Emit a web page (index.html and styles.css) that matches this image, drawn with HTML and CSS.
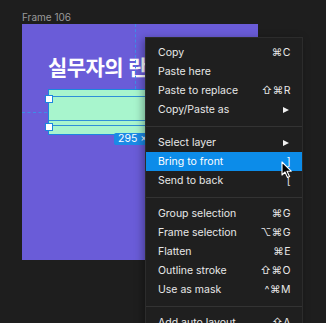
FILE: index.html
```html
<!DOCTYPE html>
<html lang="ko">
<head>
    <meta charset="UTF-8">
    <title>Frame 106</title>
    <link rel="stylesheet" href="styles.css">
</head>
<body>
    <div class="canvas">
        <div class="frame-label">Frame 106</div>
        <div class="frame">
            <h1 class="title">실무자의 란딩</h1>
            <div class="guide-v"></div>
            <div class="guide-h"></div>
            <div class="box">
                <div class="box-row top"></div>
                <div class="box-row mid"></div>
                <div class="box-row low"></div>
                <span class="handle h1"></span>
                <span class="handle h2"></span>
            </div>
            <div class="size-badge">295 × 44</div>
        </div>

        <div class="menu">
            <div class="item"><span>Copy</span><span class="key">⌘C</span></div>
            <div class="item"><span>Paste here</span></div>
            <div class="item"><span>Paste to replace</span><span class="key">⇧⌘R</span></div>
            <div class="item"><span>Copy/Paste as</span><span class="arrow"></span></div>
            <div class="sep"></div>
            <div class="item"><span>Select layer</span><span class="arrow"></span></div>
            <div class="item active"><span>Bring to front</span><span class="key">]</span></div>
            <div class="item"><span>Send to back</span><span class="key">[</span></div>
            <div class="sep"></div>
            <div class="item"><span>Group selection</span><span class="key">⌘G</span></div>
            <div class="item"><span>Frame selection</span><span class="key">⌥⌘G</span></div>
            <div class="item"><span>Flatten</span><span class="key">⌘E</span></div>
            <div class="item"><span>Outline stroke</span><span class="key">⇧⌘O</span></div>
            <div class="item"><span>Use as mask</span><span class="key">^⌘M</span></div>
            <div class="sep"></div>
            <div class="item"><span>Add auto layout</span><span class="key">⇧A</span></div>
        </div>

        <svg class="cursor" width="12" height="18" viewBox="0 0 12 18">
            <path d="M1 1 L1 14 L4 11 L6.5 16.5 L8.5 15.6 L6 10.2 L10.2 10.2 Z" fill="#000" stroke="#fff" stroke-width="1.1" stroke-linejoin="round"/>
        </svg>
    </div>
</body>
</html>
```

FILE: styles.css
```css
body {
    margin: 0;
    background-color: #1e1e1e;
    font-family: Inter, "Noto Sans", sans-serif;
    overflow: hidden;
}
.canvas {
    position: relative;
    width: 326px;
    height: 323px;
    padding: 10px 0 0 22px;
    box-sizing: border-box;
}
.frame-label {
    color: #9a9a9a;
    font-size: 10px;
    line-height: 14px;
}
.frame {
    position: relative;
    width: 236px;
    height: 236px;
    background-color: #6a5cd8;
    overflow: hidden;
    padding: 28px 0 0 26px;
    box-sizing: border-box;
}
.title {
    margin: 0;
    color: #fff;
    font-family: "Noto Sans CJK KR", sans-serif;
    font-size: 21px;
    font-weight: 700;
    letter-spacing: -0.6px;
    line-height: 28px;
    white-space: nowrap;
}
.guide-v {
    position: absolute;
    left: 113px;
    top: 0;
    height: 65px;
    border-left: 1px dashed #3d8de8;
}
.guide-h {
    position: absolute;
    left: 0;
    top: 88px;
    width: 25px;
    border-top: 1px dashed #3d8de8;
}
.box {
    position: relative;
    margin-top: 9px;
    width: 210px;
    height: 46px;
    background-color: #a8f5cd;
    border: 1px solid #1b86e0;
    box-sizing: border-box;
    display: flex;
    flex-direction: column;
}
.box-row {
    border-bottom: 1px solid #2f8fd8;
}
.box-row.top {
    height: 6px;
}
.box-row.mid {
    height: 23px;
}
.box-row.low {
    height: 4px;
}
.handle {
    position: absolute;
    left: -4px;
    width: 6px;
    height: 6px;
    background: #fff;
    border: 1px solid #1b86e0;
}
.handle.h1 {
    top: 5px;
}
.handle.h2 {
    top: 33px;
}
.size-badge {
    position: absolute;
    left: 92px;
    top: 109px;
    height: 12px;
    padding: 0 4px;
    background-color: #1b8ae6;
    color: #fff;
    font-size: 10.5px;
    line-height: 12px;
    border-radius: 2px;
}
.menu {
    position: absolute;
    left: 145px;
    top: 37px;
    width: 158px;
    height: 300px;
    background-color: #1f1f1f;
    border: 1px solid #2c2c2c;
    box-sizing: border-box;
    padding-top: 5px;
    box-shadow: -2px 2px 8px rgba(0, 0, 0, 0.35);
    color: #e8e8e8;
    font-size: 10.5px;
}
.item {
    display: flex;
    justify-content: space-between;
    align-items: center;
    height: 19px;
    padding: 0 11px 0 12px;
}
.item.active {
    background-color: #0c8ce9;
    color: #fff;
}
.key {
    font-family: Inter, "DejaVu Sans", sans-serif;
    letter-spacing: 0.5px;
}
.arrow {
    width: 0;
    height: 0;
    margin-right: 2px;
    border-top: 3.5px solid transparent;
    border-bottom: 3.5px solid transparent;
    border-left: 6px solid #f0f0f0;
}
.sep {
    height: 1px;
    margin: 7px 0 6px;
    background-color: #333;
}
.cursor {
    position: absolute;
    left: 281px;
    top: 161px;
}
```
